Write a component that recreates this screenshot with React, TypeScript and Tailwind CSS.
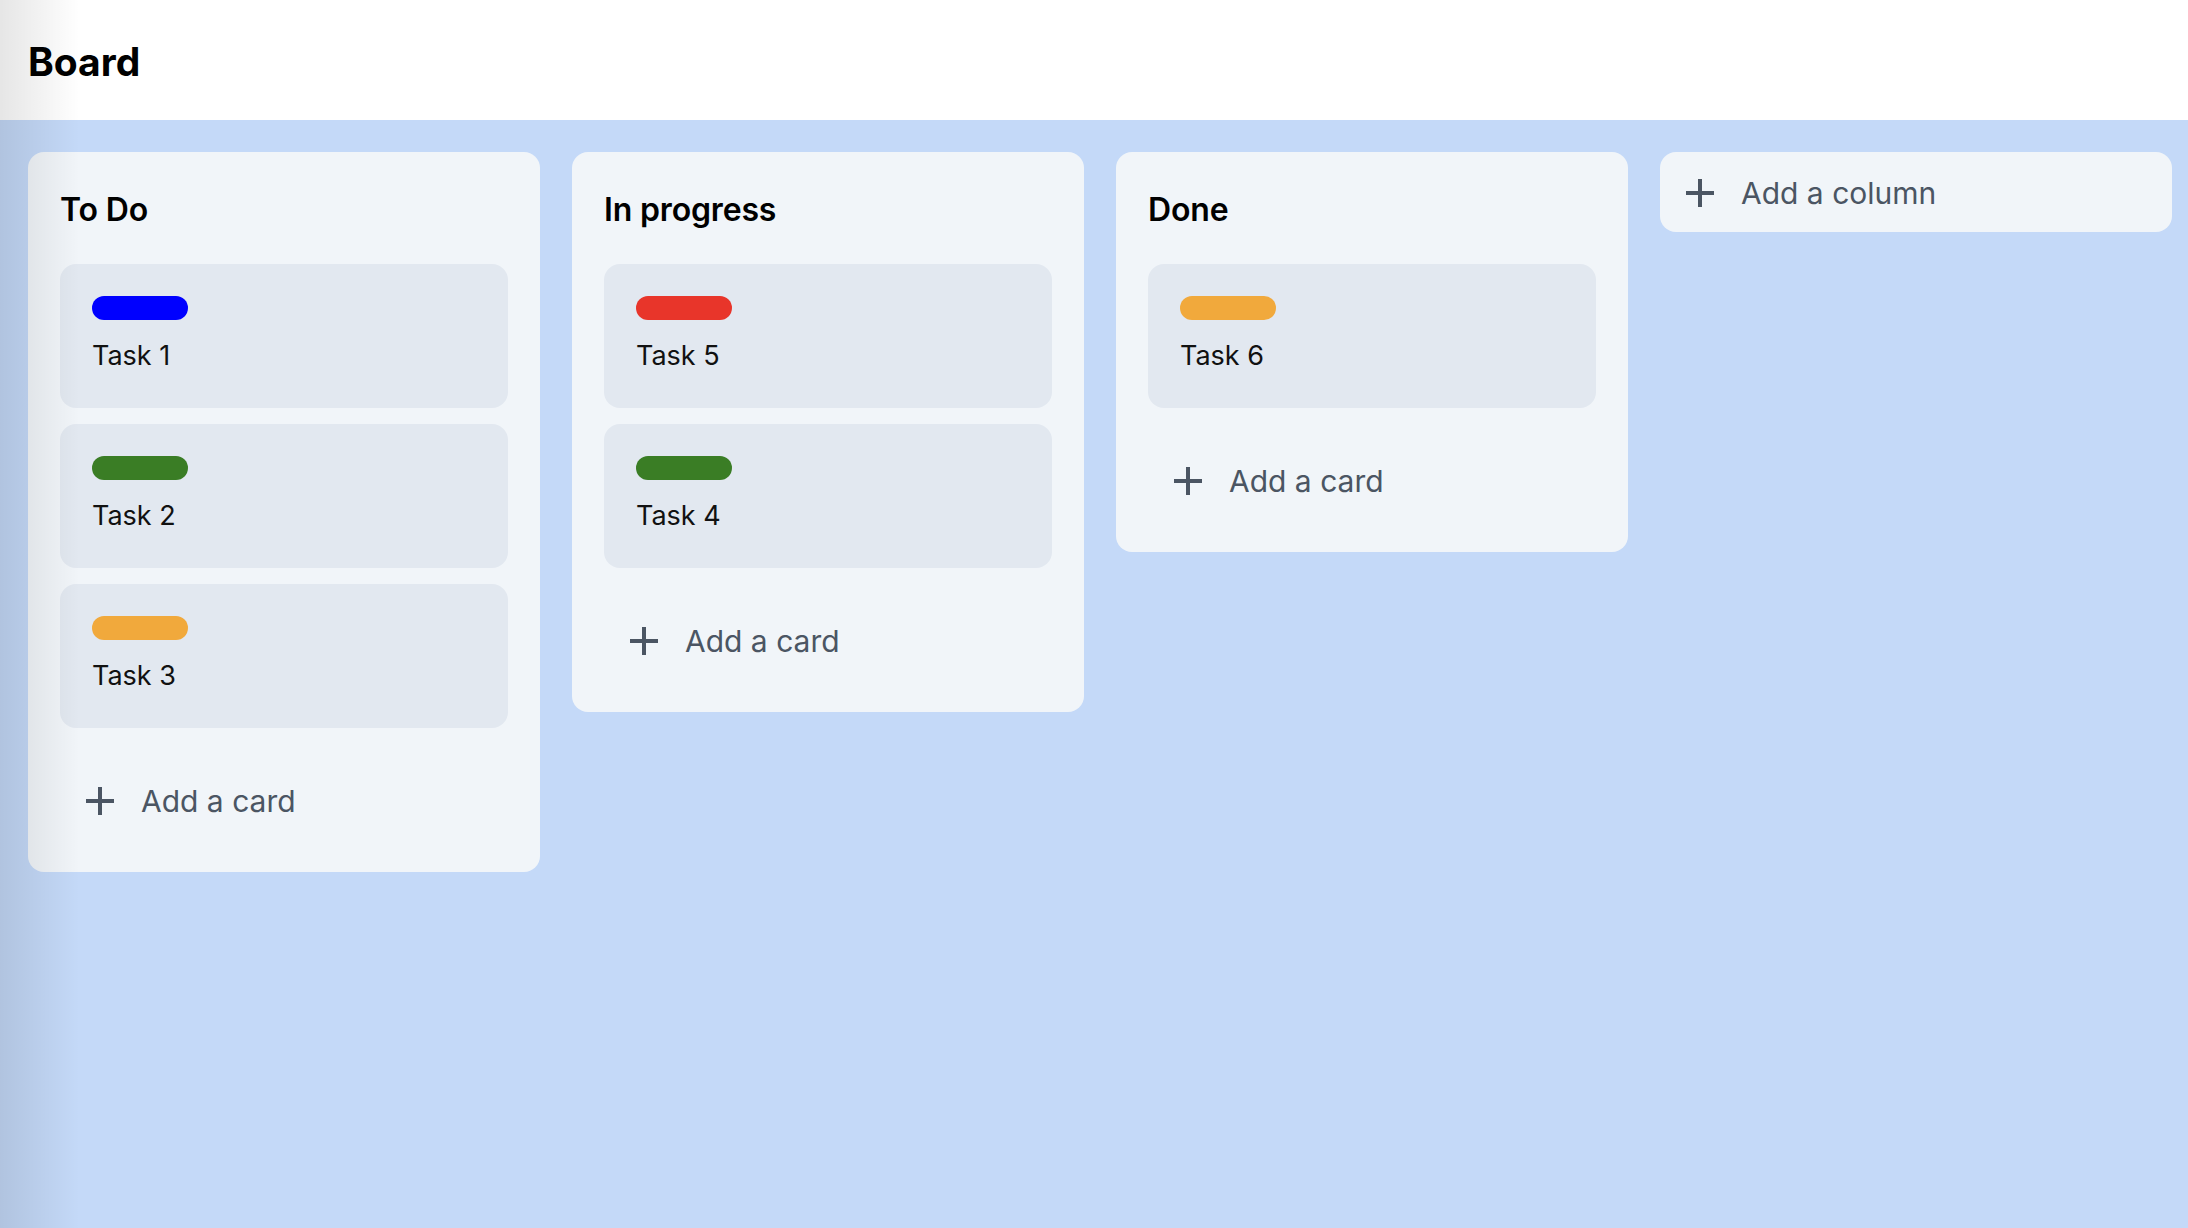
import React from "react";

type Card = { title: string; color: string };
type Column = { title: string; cards: Card[] };

const columns: Column[] = [
  {
    title: "To Do",
    cards: [
      { title: "Task 1", color: "bg-[#0000ff]" },
      { title: "Task 2", color: "bg-[#3a7d25]" },
      { title: "Task 3", color: "bg-[#f1a93c]" },
    ],
  },
  {
    title: "In progress",
    cards: [
      { title: "Task 5", color: "bg-[#e8352a]" },
      { title: "Task 4", color: "bg-[#3a7d25]" },
    ],
  },
  {
    title: "Done",
    cards: [{ title: "Task 6", color: "bg-[#f1a93c]" }],
  },
];

function PlusIcon() {
  return (
    <svg width="28" height="28" viewBox="0 0 28 28" className="shrink-0">
      <path d="M14 0V28M0 14H28" stroke="#4b5563" strokeWidth="4" fill="none" />
    </svg>
  );
}

export default function App() {
  return (
    <div
      className="relative flex min-h-screen flex-col"
      style={{ fontFamily: "Inter, 'Noto Sans', sans-serif" }}
    >
      <header className="flex h-[120px] items-center bg-white px-[28px] pt-[2px]">
        <h1 className="text-[39px] font-bold leading-none text-black">Board</h1>
      </header>
      <main className="flex flex-1 items-start gap-[32px] bg-[#c4d9f8] px-[28px] pt-[32px]">
        {columns.map((col) => (
          <section
            key={col.title}
            className="flex w-[512px] shrink-0 flex-col rounded-[16px] bg-[#f1f5f9] px-[32px] pb-[32px] pt-[34px]"
          >
            <h2 className="mb-[30px] text-[32px] font-semibold leading-[48px] tracking-[-0.005em] text-black">
              {col.title}
            </h2>
            <div className="flex flex-col gap-[16px]">
              {col.cards.map((card) => (
                <div
                  key={card.title}
                  className="flex h-[144px] flex-col rounded-[16px] bg-[#e2e8f0] px-[32px] pt-[32px]"
                >
                  <div className={`h-[24px] w-[96px] rounded-full ${card.color}`} />
                  <div className="mt-[16px] text-[27px] leading-[40px] text-[#111]">
                    {card.title}
                  </div>
                </div>
              ))}
            </div>
            <button className="mt-[32px] flex h-[80px] items-center gap-[27px] px-[26px] pt-[2px] text-left">
              <PlusIcon />
              <span className="text-[30px] leading-[48px] text-[#4b5563]">Add a card</span>
            </button>
          </section>
        ))}
        <button className="flex h-[80px] w-[512px] shrink-0 items-center gap-[27px] rounded-[16px] bg-[#f1f5f9] px-[26px] pt-[2px] text-left">
          <PlusIcon />
          <span className="text-[30px] leading-[48px] text-[#4b5563]">Add a column</span>
        </button>
      </main>
      <div className="pointer-events-none absolute inset-y-0 left-0 w-[80px] bg-gradient-to-r from-black/10 to-transparent" />
    </div>
  );
}
